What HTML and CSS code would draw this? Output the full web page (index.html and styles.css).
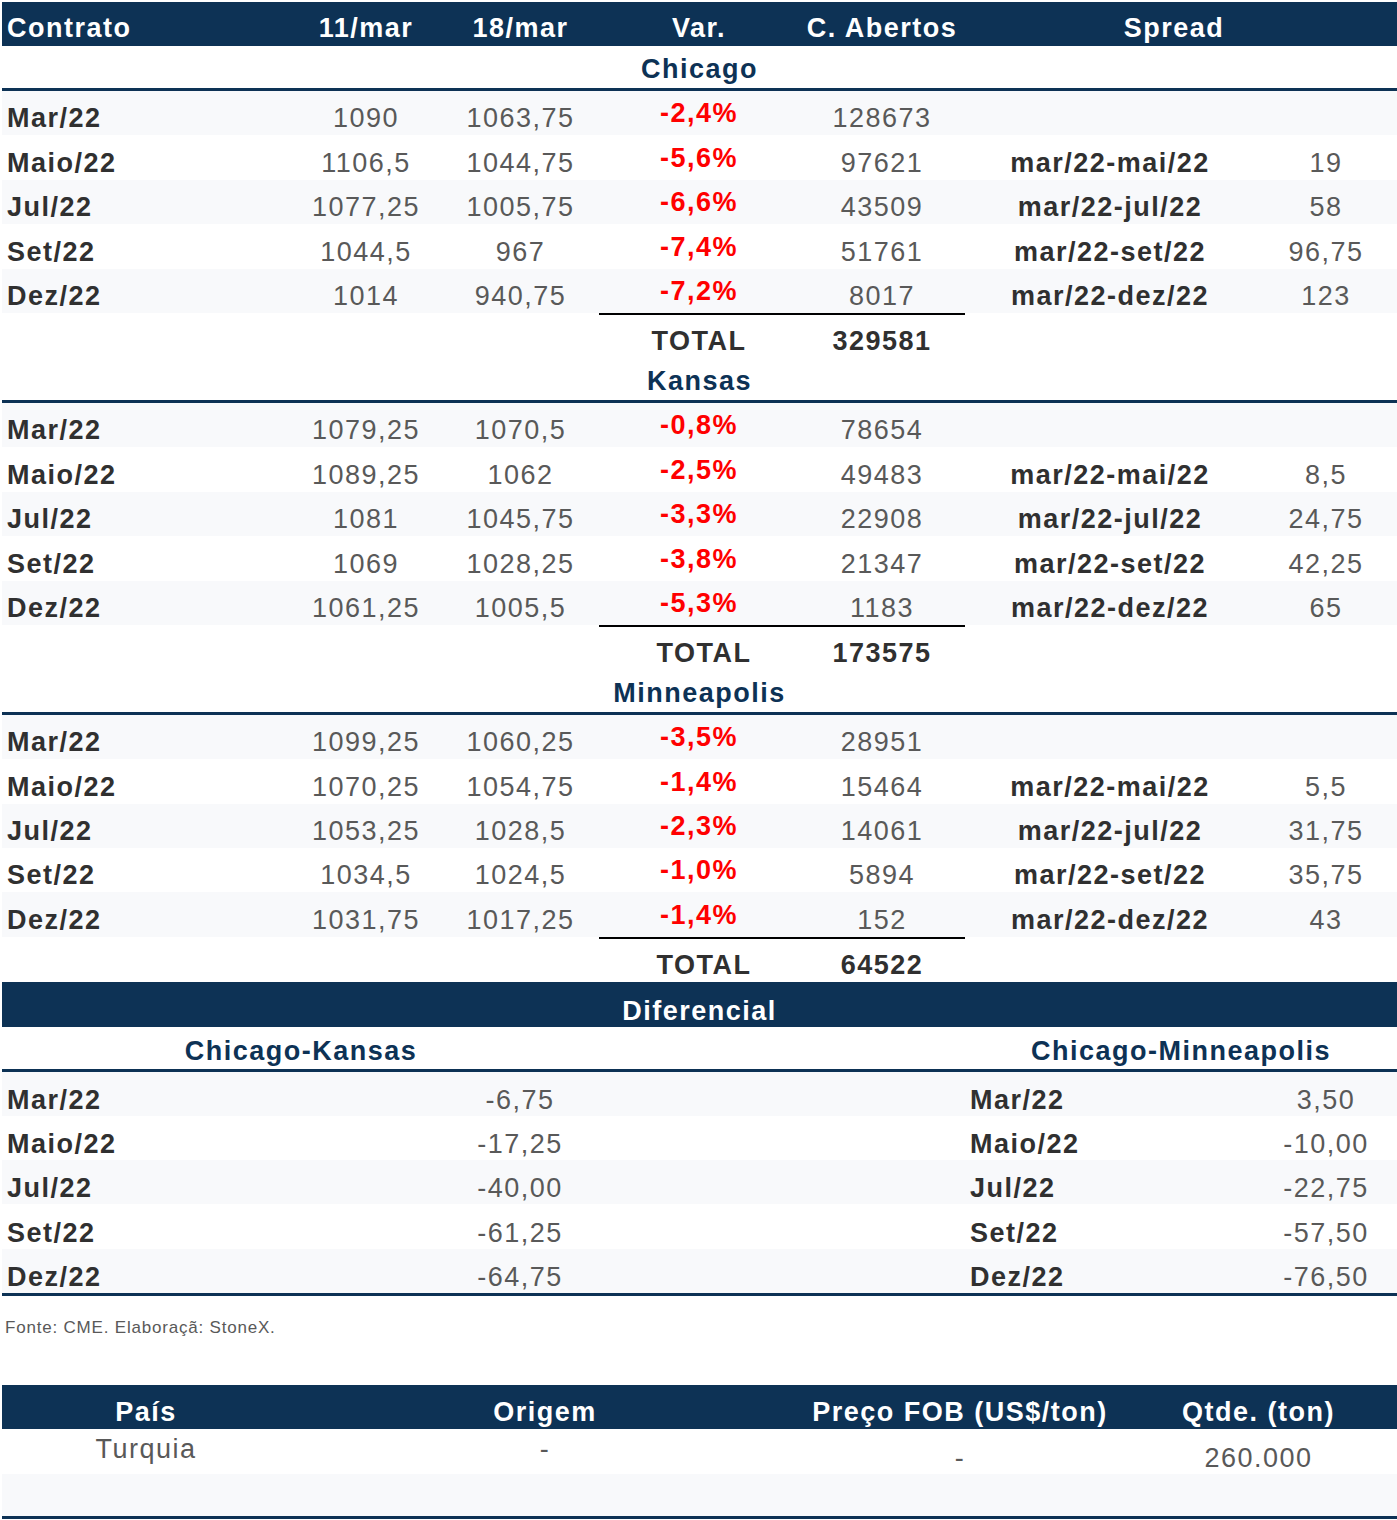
FILE: index.html
```html
<!DOCTYPE html>
<html lang="pt-BR">
<head>
<meta charset="utf-8">
<title>Trigo - Contratos</title>
<link rel="stylesheet" href="styles.css">
</head>
<body>
<div class="page">
  <div class="mrow head">
    <div class="c l">Contrato</div>
    <div class="c">11/mar</div>
    <div class="c">18/mar</div>
    <div class="c">Var.</div>
    <div class="c">C. Abertos</div>
    <div class="c span2 spread-h">Spread</div>
  </div>

  <section class="block">
    <div class="title">Chicago</div>
    <div class="mrow alt"><div class="c l b">Mar/22</div><div class="c n">1090</div><div class="c n">1063,75</div><div class="c r">-2,4%</div><div class="c n">128673</div><div class="c b"></div><div class="c n"></div></div>
    <div class="mrow"><div class="c l b">Maio/22</div><div class="c n">1106,5</div><div class="c n">1044,75</div><div class="c r">-5,6%</div><div class="c n">97621</div><div class="c b">mar/22-mai/22</div><div class="c n">19</div></div>
    <div class="mrow alt"><div class="c l b">Jul/22</div><div class="c n">1077,25</div><div class="c n">1005,75</div><div class="c r">-6,6%</div><div class="c n">43509</div><div class="c b">mar/22-jul/22</div><div class="c n">58</div></div>
    <div class="mrow"><div class="c l b">Set/22</div><div class="c n">1044,5</div><div class="c n">967</div><div class="c r">-7,4%</div><div class="c n">51761</div><div class="c b">mar/22-set/22</div><div class="c n">96,75</div></div>
    <div class="mrow alt"><div class="c l b">Dez/22</div><div class="c n">1014</div><div class="c n">940,75</div><div class="c r">-7,2%</div><div class="c n">8017</div><div class="c b">mar/22-dez/22</div><div class="c n">123</div></div>
    <div class="mrow total"><div class="c"></div><div class="c"></div><div class="c"></div><div class="c b tl">TOTAL</div><div class="c b tl">329581</div><div class="c"></div><div class="c"></div></div>
  </section>

  <section class="block">
    <div class="title">Kansas</div>
    <div class="mrow alt"><div class="c l b">Mar/22</div><div class="c n">1079,25</div><div class="c n">1070,5</div><div class="c r">-0,8%</div><div class="c n">78654</div><div class="c b"></div><div class="c n"></div></div>
    <div class="mrow"><div class="c l b">Maio/22</div><div class="c n">1089,25</div><div class="c n">1062</div><div class="c r">-2,5%</div><div class="c n">49483</div><div class="c b">mar/22-mai/22</div><div class="c n">8,5</div></div>
    <div class="mrow alt"><div class="c l b">Jul/22</div><div class="c n">1081</div><div class="c n">1045,75</div><div class="c r">-3,3%</div><div class="c n">22908</div><div class="c b">mar/22-jul/22</div><div class="c n">24,75</div></div>
    <div class="mrow"><div class="c l b">Set/22</div><div class="c n">1069</div><div class="c n">1028,25</div><div class="c r">-3,8%</div><div class="c n">21347</div><div class="c b">mar/22-set/22</div><div class="c n">42,25</div></div>
    <div class="mrow alt"><div class="c l b">Dez/22</div><div class="c n">1061,25</div><div class="c n">1005,5</div><div class="c r">-5,3%</div><div class="c n">1183</div><div class="c b">mar/22-dez/22</div><div class="c n">65</div></div>
    <div class="mrow total"><div class="c"></div><div class="c"></div><div class="c"></div><div class="c b tl shift">TOTAL</div><div class="c b tl">173575</div><div class="c"></div><div class="c"></div></div>
  </section>

  <section class="block">
    <div class="title">Minneapolis</div>
    <div class="mrow alt"><div class="c l b">Mar/22</div><div class="c n">1099,25</div><div class="c n">1060,25</div><div class="c r">-3,5%</div><div class="c n">28951</div><div class="c b"></div><div class="c n"></div></div>
    <div class="mrow"><div class="c l b">Maio/22</div><div class="c n">1070,25</div><div class="c n">1054,75</div><div class="c r">-1,4%</div><div class="c n">15464</div><div class="c b">mar/22-mai/22</div><div class="c n">5,5</div></div>
    <div class="mrow alt"><div class="c l b">Jul/22</div><div class="c n">1053,25</div><div class="c n">1028,5</div><div class="c r">-2,3%</div><div class="c n">14061</div><div class="c b">mar/22-jul/22</div><div class="c n">31,75</div></div>
    <div class="mrow"><div class="c l b">Set/22</div><div class="c n">1034,5</div><div class="c n">1024,5</div><div class="c r">-1,0%</div><div class="c n">5894</div><div class="c b">mar/22-set/22</div><div class="c n">35,75</div></div>
    <div class="mrow alt"><div class="c l b">Dez/22</div><div class="c n">1031,75</div><div class="c n">1017,25</div><div class="c r">-1,4%</div><div class="c n">152</div><div class="c b">mar/22-dez/22</div><div class="c n">43</div></div>
    <div class="mrow total"><div class="c"></div><div class="c"></div><div class="c"></div><div class="c b tl shift">TOTAL</div><div class="c b tl">64522</div><div class="c"></div><div class="c"></div></div>
  </section>

  <div class="band">Diferencial</div>
  <div class="drow dhead">
    <div class="c span2">Chicago-Kansas</div>
    <div class="c"></div>
    <div class="c span2">Chicago-Minneapolis</div>
  </div>
  <div class="diff">
    <div class="drow alt"><div class="c l b">Mar/22</div><div class="c n">-6,75</div><div class="c"></div><div class="c l b">Mar/22</div><div class="c n">3,50</div></div>
    <div class="drow"><div class="c l b">Maio/22</div><div class="c n">-17,25</div><div class="c"></div><div class="c l b">Maio/22</div><div class="c n">-10,00</div></div>
    <div class="drow alt"><div class="c l b">Jul/22</div><div class="c n">-40,00</div><div class="c"></div><div class="c l b">Jul/22</div><div class="c n">-22,75</div></div>
    <div class="drow"><div class="c l b">Set/22</div><div class="c n">-61,25</div><div class="c"></div><div class="c l b">Set/22</div><div class="c n">-57,50</div></div>
    <div class="drow alt"><div class="c l b">Dez/22</div><div class="c n">-64,75</div><div class="c"></div><div class="c l b">Dez/22</div><div class="c n">-76,50</div></div>
  </div>

  <p class="source">Fonte: CME. Elaboraçã: StoneX.</p>

  <div class="ship">
    <div class="srow shead"><div class="c">País</div><div class="c">Origem</div><div class="c">Preço FOB (US$/ton)</div><div class="c">Qtde. (ton)</div></div>
    <div class="srow sbody"><div class="c n hi">Turquia</div><div class="c n hi">-</div><div class="c n">-</div><div class="c n">260.000</div></div>
    <div class="srow sempty alt"></div>
  </div>
</div>
</body>
</html>
```

FILE: styles.css
```css
* { box-sizing: border-box; }

body {
  margin: 0;
  background: #ffffff;
  font-family: "Liberation Sans", Arial, sans-serif;
  font-size: 27px;
  letter-spacing: 1.5px;
  color: #595959;
}

.page {
  width: 1397px;
  padding: 2px 0 0 2px;
}

.c {
  line-height: 31px;
  white-space: nowrap;
  text-align: center;
}

.c.l { text-align: left; padding-left: 5px; }
.b { font-weight: bold; color: #303030; }
.n { color: #595959; }
.r { color: #ff0000; font-weight: bold; padding-bottom: 5px; }

.alt { background: #f8f9fb; }

/* main table */
.mrow {
  display: grid;
  grid-template-columns: 288px 152px 157px 200px 166px 290px 142px;
  align-items: end;
  height: 44.4px;
  padding-bottom: 1px;
}

.span2 { grid-column: span 2; }

.head {
  height: 44px;
  background: #0d3255;
  color: #ffffff;
  font-weight: bold;
  padding-bottom: 2px;
}
.head .c { color: #ffffff; }
.spread-h { padding-right: 14px; }

.title {
  height: 45px;
  border-bottom: 3px solid #0d3255;
  color: #0d3255;
  font-weight: bold;
  text-align: center;
  line-height: 31px;
  padding-top: 8px;
}

.total {
  height: 45px;
  padding-bottom: 0;
  align-items: stretch;
}
.total .c { display: flex; align-items: flex-end; justify-content: center; padding-bottom: 1px; }
.total .tl { border-top: 2px solid #000000; }
.total .shift { padding-left: 10px; }

/* diferencial */
.band {
  height: 45px;
  background: #0d3255;
  color: #ffffff;
  font-weight: bold;
  text-align: center;
  line-height: 31px;
  padding-top: 14px;
}

.drow {
  display: grid;
  grid-template-columns: 438px 160px 365px 290px 142px;
  align-items: end;
  height: 44.2px;
  padding-bottom: 0;
}

.dhead {
  height: 45px;
  border-bottom: 3px solid #0d3255;
  color: #0d3255;
  font-weight: bold;
  padding-bottom: 2px;
}
.dhead .c { color: #0d3255; }

.diff { border-bottom: 3px solid #0d3255; }

.source {
  margin: 0;
  height: 89px;
  padding: 22px 0 0 3px;
  font-size: 17px;
  letter-spacing: 0.8px;
  line-height: 20px;
  color: #595959;
}

/* ship table */
.srow {
  display: grid;
  grid-template-columns: 288px 510px 320px 277px;
  align-items: end;
}

.shead {
  height: 44px;
  background: #0d3255;
  color: #ffffff;
  font-weight: bold;
  padding-bottom: 1px;
}

.sbody {
  height: 45px;
  padding-bottom: 0;
}
.sbody .hi { padding-bottom: 9px; }

.sempty { height: 42px; }

.ship { border-bottom: 3px solid #0d3255; }
```
